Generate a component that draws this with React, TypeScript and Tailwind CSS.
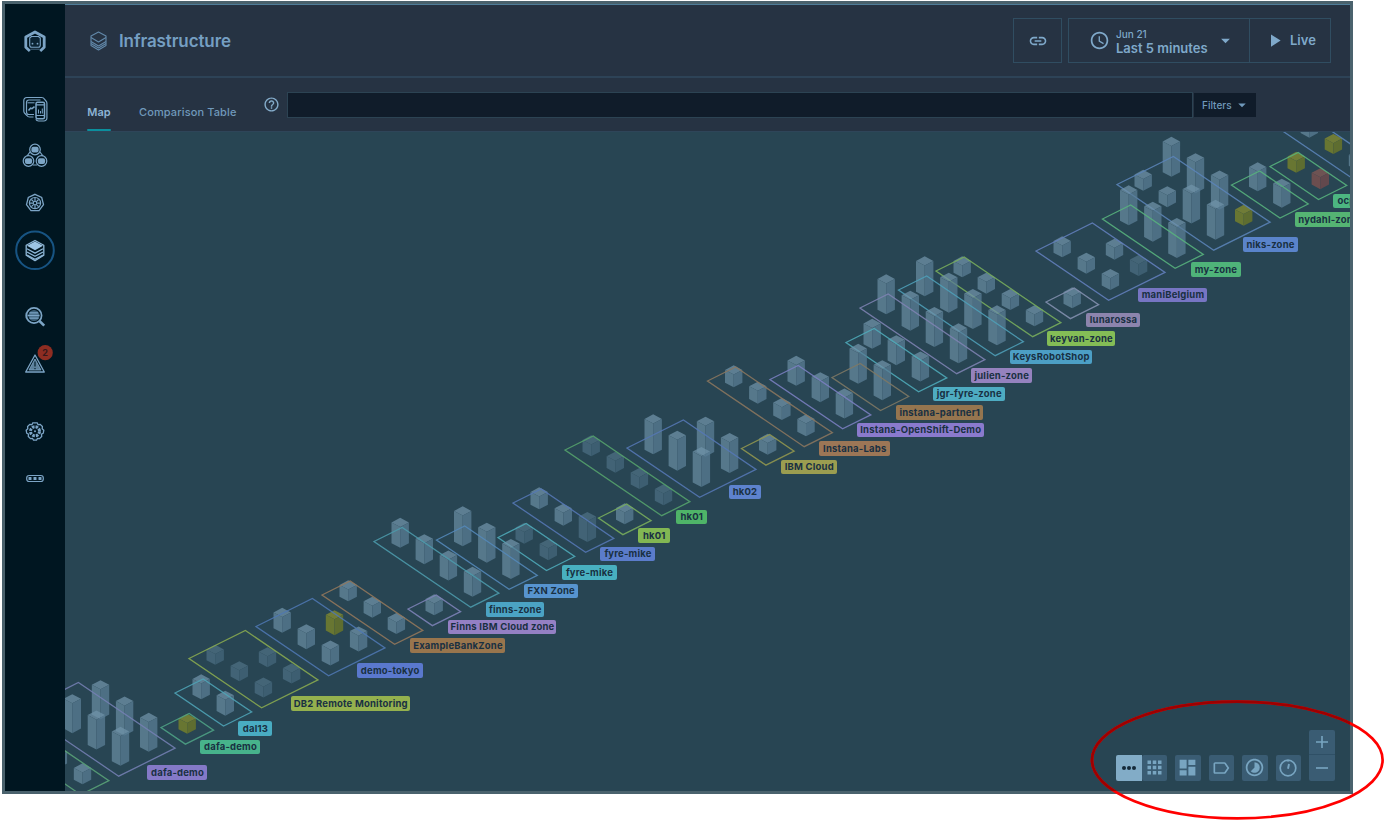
import React from "react";
import {
  MdAccessTime,
  MdApps,
  MdArrowDropDown,
  MdDashboard,
  MdHelpOutline,
  MdLabelOutline,
  MdLink,
  MdPlayArrow,
  MdTimelapse,
} from "react-icons/md";

type Tone = "n" | "d" | "y" | "r";
// column along the zone, row across it, total height, tone
type Host = [number, number, number, Tone?];

interface Zone {
  x: number;
  y: number;
  n: number;
  w: number;
  color: string;
  hosts: Host[];
}

const line = (n: number, h: number, tone: Tone = "n"): Host[] =>
  Array.from({ length: n }, (_, i) => [i, 0, h, tone] as Host);

const ZONES: Zone[] = [
  { x: 1259, y: 115, n: 6, w: 1, color: "#5b84b8", hosts: [[1, 0, 20], [2, 0, 20, "y"], [3, 0, 20]] },
  { x: 1270, y: 166.5, n: 2, w: 1, color: "#58b37d", hosts: [[0, 0, 21, "y"], [1, 0, 21, "r"]] },
  { x: 1231.5, y: 185, n: 2, w: 1, color: "#58b37d", hosts: line(2, 29) },
  {
    x: 1117, y: 184.5, n: 4, w: 2, color: "#5b84b8",
    hosts: [[0, 1, 40], [1, 1, 40], [2, 1, 39], [3, 1, 21, "y"], [0, 0, 21], [1, 0, 21], [2, 0, 39], [3, 0, 40]],
  },
  { x: 1102.5, y: 219, n: 3, w: 1, color: "#58b37d", hosts: line(3, 40) },
  {
    x: 1036, y: 251, n: 3, w: 2, color: "#637fbd",
    hosts: [[1, 1, 21], [2, 1, 21, "d"], [0, 0, 21], [1, 0, 21], [2, 0, 21]],
  },
  { x: 1046, y: 302, n: 1, w: 1, color: "#8491b1", hosts: line(1, 21) },
  { x: 936, y: 271, n: 4, w: 1, color: "#79ae5c", hosts: line(4, 21) },
  { x: 898.5, y: 290, n: 4, w: 1, color: "#4e9fb8", hosts: line(4, 40) },
  { x: 860, y: 308, n: 4, w: 1, color: "#7e83b3", hosts: line(4, 40) },
  { x: 846, y: 342.5, n: 3, w: 1, color: "#4fabb9", hosts: line(3, 30) },
  { x: 832, y: 377.5, n: 2, w: 1, color: "#7f7964", hosts: line(2, 40) },
  { x: 770, y: 379.5, n: 3, w: 1, color: "#7b7fc2", hosts: line(3, 30) },
  { x: 707.5, y: 381, n: 4, w: 1, color: "#8b765f", hosts: line(4, 22) },
  { x: 741.5, y: 448.5, n: 1, w: 1, color: "#92974f", hosts: line(1, 21) },
  {
    x: 627, y: 448, n: 3, w: 2, color: "#5578b5",
    hosts: [[1, 1, 40], [2, 1, 40], [0, 0, 40], [1, 0, 40], [2, 0, 40]],
  },
  { x: 565, y: 450, n: 4, w: 1, color: "#55a36c", hosts: line(4, 21, "d") },
  { x: 598.5, y: 518, n: 1, w: 1, color: "#79ae5c", hosts: line(1, 21) },
  { x: 513, y: 503, n: 3, w: 1, color: "#5578b5", hosts: [[0, 0, 22], [1, 0, 22], [2, 0, 30, "d"]] },
  { x: 498, y: 537.5, n: 2, w: 1, color: "#4fabb9", hosts: line(2, 21, "d") },
  { x: 436.5, y: 540, n: 3, w: 1, color: "#5489ba", hosts: line(3, 40) },
  { x: 374, y: 541.5, n: 4, w: 1, color: "#4c9bac", hosts: line(4, 30) },
  { x: 408, y: 609, n: 1, w: 1, color: "#7e83b8", hosts: line(1, 21) },
  { x: 322, y: 595, n: 3, w: 1, color: "#94775b", hosts: line(3, 21) },
  {
    x: 256, y: 626.5, n: 3, w: 2, color: "#4e78b3",
    hosts: [[1, 1, 25, "y"], [2, 1, 25], [0, 0, 25], [1, 0, 25], [2, 0, 25]],
  },
  {
    x: 189, y: 658.5, n: 3, w: 2, color: "#8aab50",
    hosts: [[1, 1, 20, "d"], [2, 1, 20, "d"], [0, 0, 20, "d"], [1, 0, 20, "d"], [2, 0, 20, "d"]],
  },
  { x: 175, y: 693, n: 2, w: 1, color: "#4fa4b6", hosts: line(2, 25) },
  { x: 161, y: 727.5, n: 1, w: 1, color: "#4ea385", hosts: [[0, 0, 20, "y"]] },
  {
    x: 22, y: 710.5, n: 4, w: 2, color: "#747fb3",
    hosts: [[1, 1, 39], [2, 1, 39], [3, 1, 39], [1, 0, 39], [2, 0, 39], [3, 0, 39]],
  },
  { x: -16, y: 729, n: 4, w: 1, color: "#5aa377", hosts: [[3, 0, 21], [2, 0, 21]] },
];

interface Tag {
  x: number;
  y: number;
  w: number;
  text: string;
  bg: string;
}

const TAGS: Tag[] = [
  { x: 1333, y: 193.5, w: 26, text: "ocp", bg: "#4cb681" },
  { x: 1295, y: 212, w: 66, text: "nydahl-zone", bg: "#55b473" },
  { x: 1242.5, y: 237, w: 55, text: "niks-zone", bg: "#5a84cb" },
  { x: 1190.5, y: 262, w: 50, text: "my-zone", bg: "#4fb379" },
  { x: 1138, y: 287.5, w: 69, text: "maniBelgium", bg: "#7775c3" },
  { x: 1086, y: 312.5, w: 54, text: "lunarossa", bg: "#8c84ad" },
  { x: 1047, y: 331, w: 68, text: "keyvan-zone", bg: "#84bd56" },
  { x: 1009.5, y: 349.5, w: 82.5, text: "KeysRobotShop", bg: "#4c9fc5" },
  { x: 971, y: 368, w: 60.5, text: "julien-zone", bg: "#9582be" },
  { x: 933, y: 386.5, w: 71.5, text: "jgr-fyre-zone", bg: "#4eacc2" },
  { x: 895.5, y: 405, w: 87.5, text: "instana-partner1", bg: "#95754f" },
  { x: 857, y: 422.5, w: 126.5, text: "Instana-OpenShift-Demo", bg: "#8a7acd" },
  { x: 819, y: 441, w: 70.5, text: "Instana-Labs", bg: "#9c7656" },
  { x: 780.5, y: 459.5, w: 56.5, text: "IBM Cloud", bg: "#9b9d50" },
  { x: 728.5, y: 484.5, w: 32, text: "hk02", bg: "#5d82cd" },
  { x: 675.5, y: 509.5, w: 31.5, text: "hk01", bg: "#4fb468" },
  { x: 638, y: 528, w: 31.5, text: "hk01", bg: "#82b753" },
  { x: 600, y: 546.5, w: 55, text: "fyre-mike", bg: "#5b7ccb" },
  { x: 561.5, y: 565, w: 55, text: "fyre-mike", bg: "#48b0c0" },
  { x: 524, y: 583.5, w: 53.5, text: "FXN Zone", bg: "#5794cf" },
  { x: 485.5, y: 602, w: 58.5, text: "finns-zone", bg: "#4ba3c4" },
  { x: 448, y: 619.5, w: 108, text: "Finns IBM Cloud zone", bg: "#9480c4" },
  { x: 410, y: 638, w: 95, text: "ExampleBankZone", bg: "#98754d" },
  { x: 357, y: 663, w: 65.5, text: "demo-tokyo", bg: "#5a78cd" },
  { x: 290.5, y: 696, w: 119.5, text: "DB2 Remote Monitoring", bg: "#94b14e" },
  { x: 238, y: 721, w: 34, text: "dal13", bg: "#49acc2" },
  { x: 200, y: 739.5, w: 60, text: "dafa-demo", bg: "#47b38b" },
  { x: 147, y: 765, w: 60, text: "dafa-demo", bg: "#8479c7" },
];

const TONES: Record<Tone, [string, string, string, number]> = {
  n: ["#7093a9", "#668a9f", "#5a7e96", 0.74],
  d: ["#527589", "#4f7287", "#476b80", 0.68],
  y: ["#788234", "#6f7c2f", "#64722d", 0.9],
  r: ["#765554", "#74504f", "#69494d", 0.9],
};

// unit vectors of the isometric floor
const AX = 24.1;
const AY = 16.35;
const BX = 28.2;
const BY = -14;

function HostBlock({ x, y, h, tone }: { x: number; y: number; h: number; tone: Tone }) {
  const [top, left, right, opacity] = TONES[tone];
  const r = 8.7;
  const s = 4.6;
  const t = y - h;
  return (
    <g opacity={opacity}>
      <polygon points={`${x},${t} ${x + r},${t + s} ${x},${t + 2 * s} ${x - r},${t + s}`} fill={top} />
      <polygon points={`${x - r},${t + s} ${x},${t + 2 * s} ${x},${y} ${x - r},${y - s}`} fill={left} />
      <polygon points={`${x + r},${t + s} ${x},${t + 2 * s} ${x},${y} ${x + r},${y - s}`} fill={right} />
    </g>
  );
}

function ZoneShape({ zone }: { zone: Zone }) {
  const { x, y, n, w, color, hosts } = zone;
  const ax = n * AX + 0.3;
  const ay = n * AY + 0.3;
  const bx = w * BX;
  const by = w * BY;
  return (
    <g>
      {hosts.map(([i, j, h, tone], k) => (
        <HostBlock key={k} x={x + 26.2 + i * AX + j * BX} y={y + 6.3 + i * AY + j * BY} h={h} tone={tone ?? "n"} />
      ))}
      <polygon
        points={`${x},${y} ${x + bx},${y + by} ${x + bx + ax},${y + by + ay} ${x + ax},${y + ay}`}
        fill="none"
        stroke={color}
        strokeWidth="1.3"
        strokeOpacity=".88"
      />
    </g>
  );
}

function InfraMap() {
  return (
    <div className="relative min-h-0 flex-1 overflow-hidden bg-[#284553]">
      <svg className="absolute inset-0 h-full w-full" viewBox="65 132 1285 659" preserveAspectRatio="none">
        {ZONES.map((z, i) => (
          <ZoneShape key={i} zone={z} />
        ))}
      </svg>
      {TAGS.map((t, i) => (
        <div
          key={i}
          className="absolute flex h-[14.5px] items-center justify-center rounded-[2px] pt-px pl-px text-[9.5px] font-bold tracking-[0.2px] whitespace-nowrap text-[#193042]"
          style={{ left: t.x - 65, top: t.y - 132, width: t.w, backgroundColor: t.bg }}
        >
          {t.text}
        </div>
      ))}
      <div className="absolute right-[15.5px] bottom-[10.5px] flex items-end gap-2 text-[#78a5c1]">
        <div className="flex">
          <div className="flex h-[25.5px] w-[25.5px] items-center justify-center gap-[1.5px] rounded-l-[2px] bg-[#82acc7]">
            <i className="size-[3.5px] rounded-full bg-[#152a39]" />
            <i className="size-[3.5px] rounded-full bg-[#152a39]" />
            <i className="size-[3.5px] rounded-full bg-[#152a39]" />
          </div>
          <ToolButton>
            <MdApps className="size-[21px]" />
          </ToolButton>
        </div>
        <ToolButton>
          <MdDashboard className="size-[21px]" />
        </ToolButton>
        <ToolButton>
          <MdLabelOutline className="size-[20px]" />
        </ToolButton>
        <ToolButton>
          <MdTimelapse className="size-[21px]" />
        </ToolButton>
        <ToolButton>
          <svg className="size-[20px]" viewBox="0 0 20 20" fill="none" stroke="currentColor" strokeWidth="1.7">
            <circle cx="10" cy="10" r="7.8" />
            <path d="M10 10.8 11 6" strokeWidth="1.9" />
            <path d="M10 2v2" strokeWidth="1" />
          </svg>
        </ToolButton>
        <div className="flex flex-col">
          <div className="flex h-[25px] w-[25.5px] items-center justify-center rounded-t-[2px] border-b border-[#2f5066] bg-[#3a5c73]">
            <svg className="size-[12px]" viewBox="0 0 12 12" stroke="currentColor" strokeWidth="1.6">
              <path d="M6 0v12M0 6h12" />
            </svg>
          </div>
          <div className="flex h-[25.5px] w-[25.5px] items-center justify-center rounded-b-[2px] bg-[#3a5c73]">
            <svg className="size-[12px]" viewBox="0 0 12 12" stroke="currentColor" strokeWidth="1.6">
              <path d="M0 6h12" />
            </svg>
          </div>
        </div>
      </div>
    </div>
  );
}

function ToolButton({ children }: { children: React.ReactNode }) {
  return (
    <div className="flex h-[25.5px] w-[25.5px] items-center justify-center rounded-[2px] bg-[#3a5c73]">{children}</div>
  );
}

function Sidebar() {
  return (
    <div className="w-[60px] shrink-0 bg-[#001621] text-[#7ca5c6]">
      {/* 60 x 500 strip of navigation glyphs */}
      <svg width="60" height="500" viewBox="5 4 60 500" fill="none" stroke="currentColor" strokeWidth="1.3">
        {/* robot logo */}
        <g strokeLinejoin="round">
          <path d="M29.800 51 25.800 47.300V37L35 32l9.200 5v10.300L40.200 51" strokeWidth="2.8" strokeLinejoin="round" />
          <path
            d="M31.500 36.500h7l1.800 1.500v7.200a2 2 0 0 1-2 2h-6.600a2 2 0 0 1-2-2V38z"
            strokeWidth="1.100"
            fill="#0b2433"
          />
          <path d="M30.500 49.200h9" strokeWidth="1" opacity=".6" />
          <circle cx="32.500" cy="43.700" r=".9" fill="currentColor" stroke="none" />
          <circle cx="37.500" cy="43.700" r=".9" fill="currentColor" stroke="none" />
        </g>
        {/* websites and mobile apps */}
        <g strokeWidth="1.2">
          <path d="M33.500 117h-4a3 3 0 0 1-2.600-1.500l-2.400-2.500a3 3 0 0 1-.7-2v-10.300a3.200 3.200 0 0 1 3.200-3.200h14.500a3.500 3.500 0 0 1 3 1.600l1.500 1.900a3 3 0 0 1 .9 2.200v14.800a3 3 0 0 1-3 3h-5.400a3 3 0 0 1-2.700-1.800" />
          <path d="M34 114.500h-5a2.500 2.500 0 0 1-2.500-2.500v-9.500a2.500 2.500 0 0 1 2.500-2.500h11.500" />
          <path d="M27.500 102.800h7" strokeWidth="1" />
          <path d="M28.500 110.500l2-2.300 1.500.5 2.500-2" strokeWidth="1.500" />
          <rect x="36" y="102.300" width="8.500" height="16.500" rx="1.500" strokeWidth="1.500" />
          <path d="M36 104.800h8.500M36 115.500h8.500" />
          <path d="M38.500 113.500v-4M40.500 113.500v-2.500M42.300 113.500v-5" strokeWidth="1" />
        </g>
        {/* applications */}
        <g>
          {[
            [35, 149.5],
            [28.5, 161],
            [41.5, 161],
          ].map(([cx, cy]) => (
            <g key={cx}>
              <circle cx={cx} cy={cy} r="5.3" strokeWidth="1.2" />
              <rect x={cx - 3.6} y={cy - 2.7} width="7.2" height="5.6" rx="2" fill="currentColor" stroke="none" />
            </g>
          ))}
          <path d="M30 152l-3 4M40 152l3 4M33 165h4" strokeWidth="1.2" />
        </g>
        {/* kubernetes wheel */}
        <g>
          <path d="M35 194.3l6.7 3.200 1.800 7.200-4.500 5.900h-8l-4.500-5.900 1.800-7.200z" strokeWidth="1.300" />
          <circle cx="35" cy="203.100" r="5.600" strokeWidth="1.200" />
          <path
            d="M35 198v3.500M35 204.700v3.500M30 203.100h3.500M36.500 203.100h3.500M31.400 199.500l2.400 2.400M36.200 204.300l2.400 2.400M38.600 199.500l-2.400 2.400M33.800 204.300l-2.400 2.400"
            strokeWidth="1.200"
          />
          <circle cx="35" cy="203.100" r="1.700" strokeWidth="1" />
        </g>
        {/* infrastructure, selected */}
        <circle cx="35" cy="250.300" r="18.800" stroke="#175483" strokeWidth="2" />
        <g strokeLinejoin="round" stroke="#8fb8d8">
          <path d="M35 240.500l8.800 4.800v10l-8.800 5.300-8.800-5.300v-10z" strokeWidth="1.300" />
          <path d="M35 241.500l8 4.300-8 4.500-8-4.500z" fill="#9cc4e4" stroke="none" />
          <path d="M27 248.800l8 4.300 8-4.300M27 252l8 4.300 8-4.300M27 255l8 4.300 8-4.300" strokeWidth="1.300" />
        </g>
        {/* analytics */}
        <g>
          <circle cx="34" cy="315.500" r="7.600" strokeWidth="1.700" />
          <path d="M39.500 321l4.700 4.700" strokeWidth="2.600" />
          <circle cx="34" cy="315.500" r="5.500" fill="#3c6079" stroke="none" />
          <path d="M29.500 312.800h8.500M27.500 315.500h12M29.500 318.200h9" strokeWidth="1.300" />
          <path d="M26.200 312.800v5.400" strokeWidth="1.200" />
        </g>
        {/* events */}
        <g strokeLinejoin="round">
          <path d="M35 355l9.300 17H25.700z" strokeWidth="1.300" />
          <path d="M35 359l6 11H29z" fill="currentColor" fillOpacity=".75" strokeWidth=".8" />
          <path d="M35 361.500v5M35 368v1.300" stroke="#0b2838" strokeWidth="1.300" />
        </g>
        <circle cx="45.200" cy="352.700" r="7.600" fill="#8e2d22" stroke="none" />
        <text x="45.200" y="355.900" textAnchor="middle" fill="#35181b" stroke="none" className="text-[9px] font-bold">
          2
        </text>
        {/* settings */}
        <g>
          <path
            d="M32.800 422.800h4.400l.9 1.900 2.100-.3 2.200 2.200-.2 2.200 1.600 1.400-.5 3-1.800 1 .2 2.200-2.200 2.200-2-.1-1 1.700h-3l-1-1.700-2 .1-2.200-2.200.2-2.200-1.800-1-.5-3 1.600-1.400-.2-2.200 2.200-2.200 2.100.3z"
            strokeWidth="1.300"
          />
          <circle cx="35" cy="431.300" r="4.500" strokeWidth="3" strokeDasharray="2.500 1.034" />
          <circle cx="35" cy="431.300" r="1" fill="currentColor" stroke="none" />
        </g>
        {/* more */}
        <rect x="26.700" y="475.500" width="16.600" height="6" rx="2.500" strokeWidth="1.200" />
        <g fill="currentColor" stroke="none">
          <rect x="28.500" y="477" width="3" height="3" rx=".6" />
          <rect x="33.500" y="477" width="3" height="3" rx=".6" />
          <rect x="38.500" y="477" width="3" height="3" rx=".6" />
        </g>
      </svg>
    </div>
  );
}

function TopBar() {
  return (
    <div className="flex h-[73px] shrink-0 items-center border-b-2 border-[#2d4357] pr-[19px] pl-[25px]">
      <svg width="17" height="20" viewBox="0 0 17 20" fill="none" stroke="#6289aa" strokeWidth="1.1" strokeLinejoin="round">
        <path d="M8.500 1 16 5v9.500L8.500 19 1 14.500V5z" />
        <path d="M1 6.500 8.500 11 16 6.500M1 10.500 8.500 15 16 10.500M1 12.500 8.500 17 16 12.500" />
      </svg>
      <div className="ml-[12px] pt-[2px] text-[17px] font-semibold tracking-[-0.1px] text-[#759fc2]">Infrastructure</div>
      <div className="ml-auto flex h-[45px] gap-[6px] text-[#7fa9ca]">
        <div className="flex w-[49px] items-center justify-center border border-[#304d61]">
          <MdLink className="size-[20px]" />
        </div>
        <div className="flex w-[263px] border border-[#304d61]">
          <div className="flex flex-1 items-center pl-[20px]">
            <MdAccessTime className="size-[21px]" />
            <div className="ml-[6px] w-[95px] pt-[2px]">
              <div className="text-[10px] leading-[13px] font-medium">Jun 21</div>
              <div className="text-[13px] leading-[14px] font-semibold whitespace-nowrap">Last 5 minutes</div>
            </div>
            <MdArrowDropDown className="ml-[4px] size-[21px]" />
          </div>
          <div className="flex w-[81px] items-center border-l border-[#304d61] pl-[14px]">
            <MdPlayArrow className="size-[21px]" />
            <span className="ml-[5px] pt-px text-[13px] font-semibold">Live</span>
          </div>
        </div>
      </div>
    </div>
  );
}

function TabBar() {
  return (
    <div className="flex h-[54px] shrink-0 border-b border-[#2e4559] text-[#7099bb]">
      <div className="ml-[22px] flex w-[24px] flex-col items-center justify-end">
        <span className="mb-[10px] text-[11px] leading-[14px] font-semibold text-[#8db5d5]">Map</span>
        <i className="h-[2.5px] w-[24px] rounded-full bg-[#0b8f9d]" />
      </div>
      <div className="ml-[28px] flex w-[98px] items-end">
        <span className="mb-[12px] text-[11px] leading-[14px] font-medium tracking-[0.12px] whitespace-nowrap">
          Comparison Table
        </span>
      </div>
      <MdHelpOutline className="mt-[18px] ml-[26px] size-[17px] text-[#84acca]" />
      <div className="mt-[14px] ml-[7px] h-[26px] w-[906px] border border-[#2c4353] bg-[#101c2a]" />
      <div className="mt-[15px] ml-px flex h-[24px] w-[62px] items-center bg-[#101c2a] pl-[8px] text-[10px] font-medium">
        Filters
        <MdArrowDropDown className="ml-[1px] size-[18px]" />
      </div>
    </div>
  );
}

export default function App() {
  return (
    <div className="relative h-[823px] w-[1386px] overflow-hidden bg-white pt-px pl-[2px] font-['Inter','Liberation_Sans',sans-serif]">
      <div className="flex h-[793px] w-[1351px] border-[3px] border-[#4a626d] bg-[#263343]">
        <Sidebar />
        <div className="flex min-w-0 flex-1 flex-col border-t border-[#4f7d99]">
          <TopBar />
          <TabBar />
          <InfraMap />
        </div>
      </div>
      <svg className="pointer-events-none absolute inset-0" width="1386" height="823" fill="none" strokeWidth="2.7">
        <defs>
          <clipPath id="inside">
            <rect x="0" y="0" width="1350" height="791" />
          </clipPath>
        </defs>
        <ellipse cx="1237.3" cy="760" rx="145.300" ry="58.300" stroke="#ff0000" />
        <ellipse cx="1237.3" cy="760" rx="145.300" ry="58.300" stroke="#9d0000" clipPath="url(#inside)" />
      </svg>
    </div>
  );
}
